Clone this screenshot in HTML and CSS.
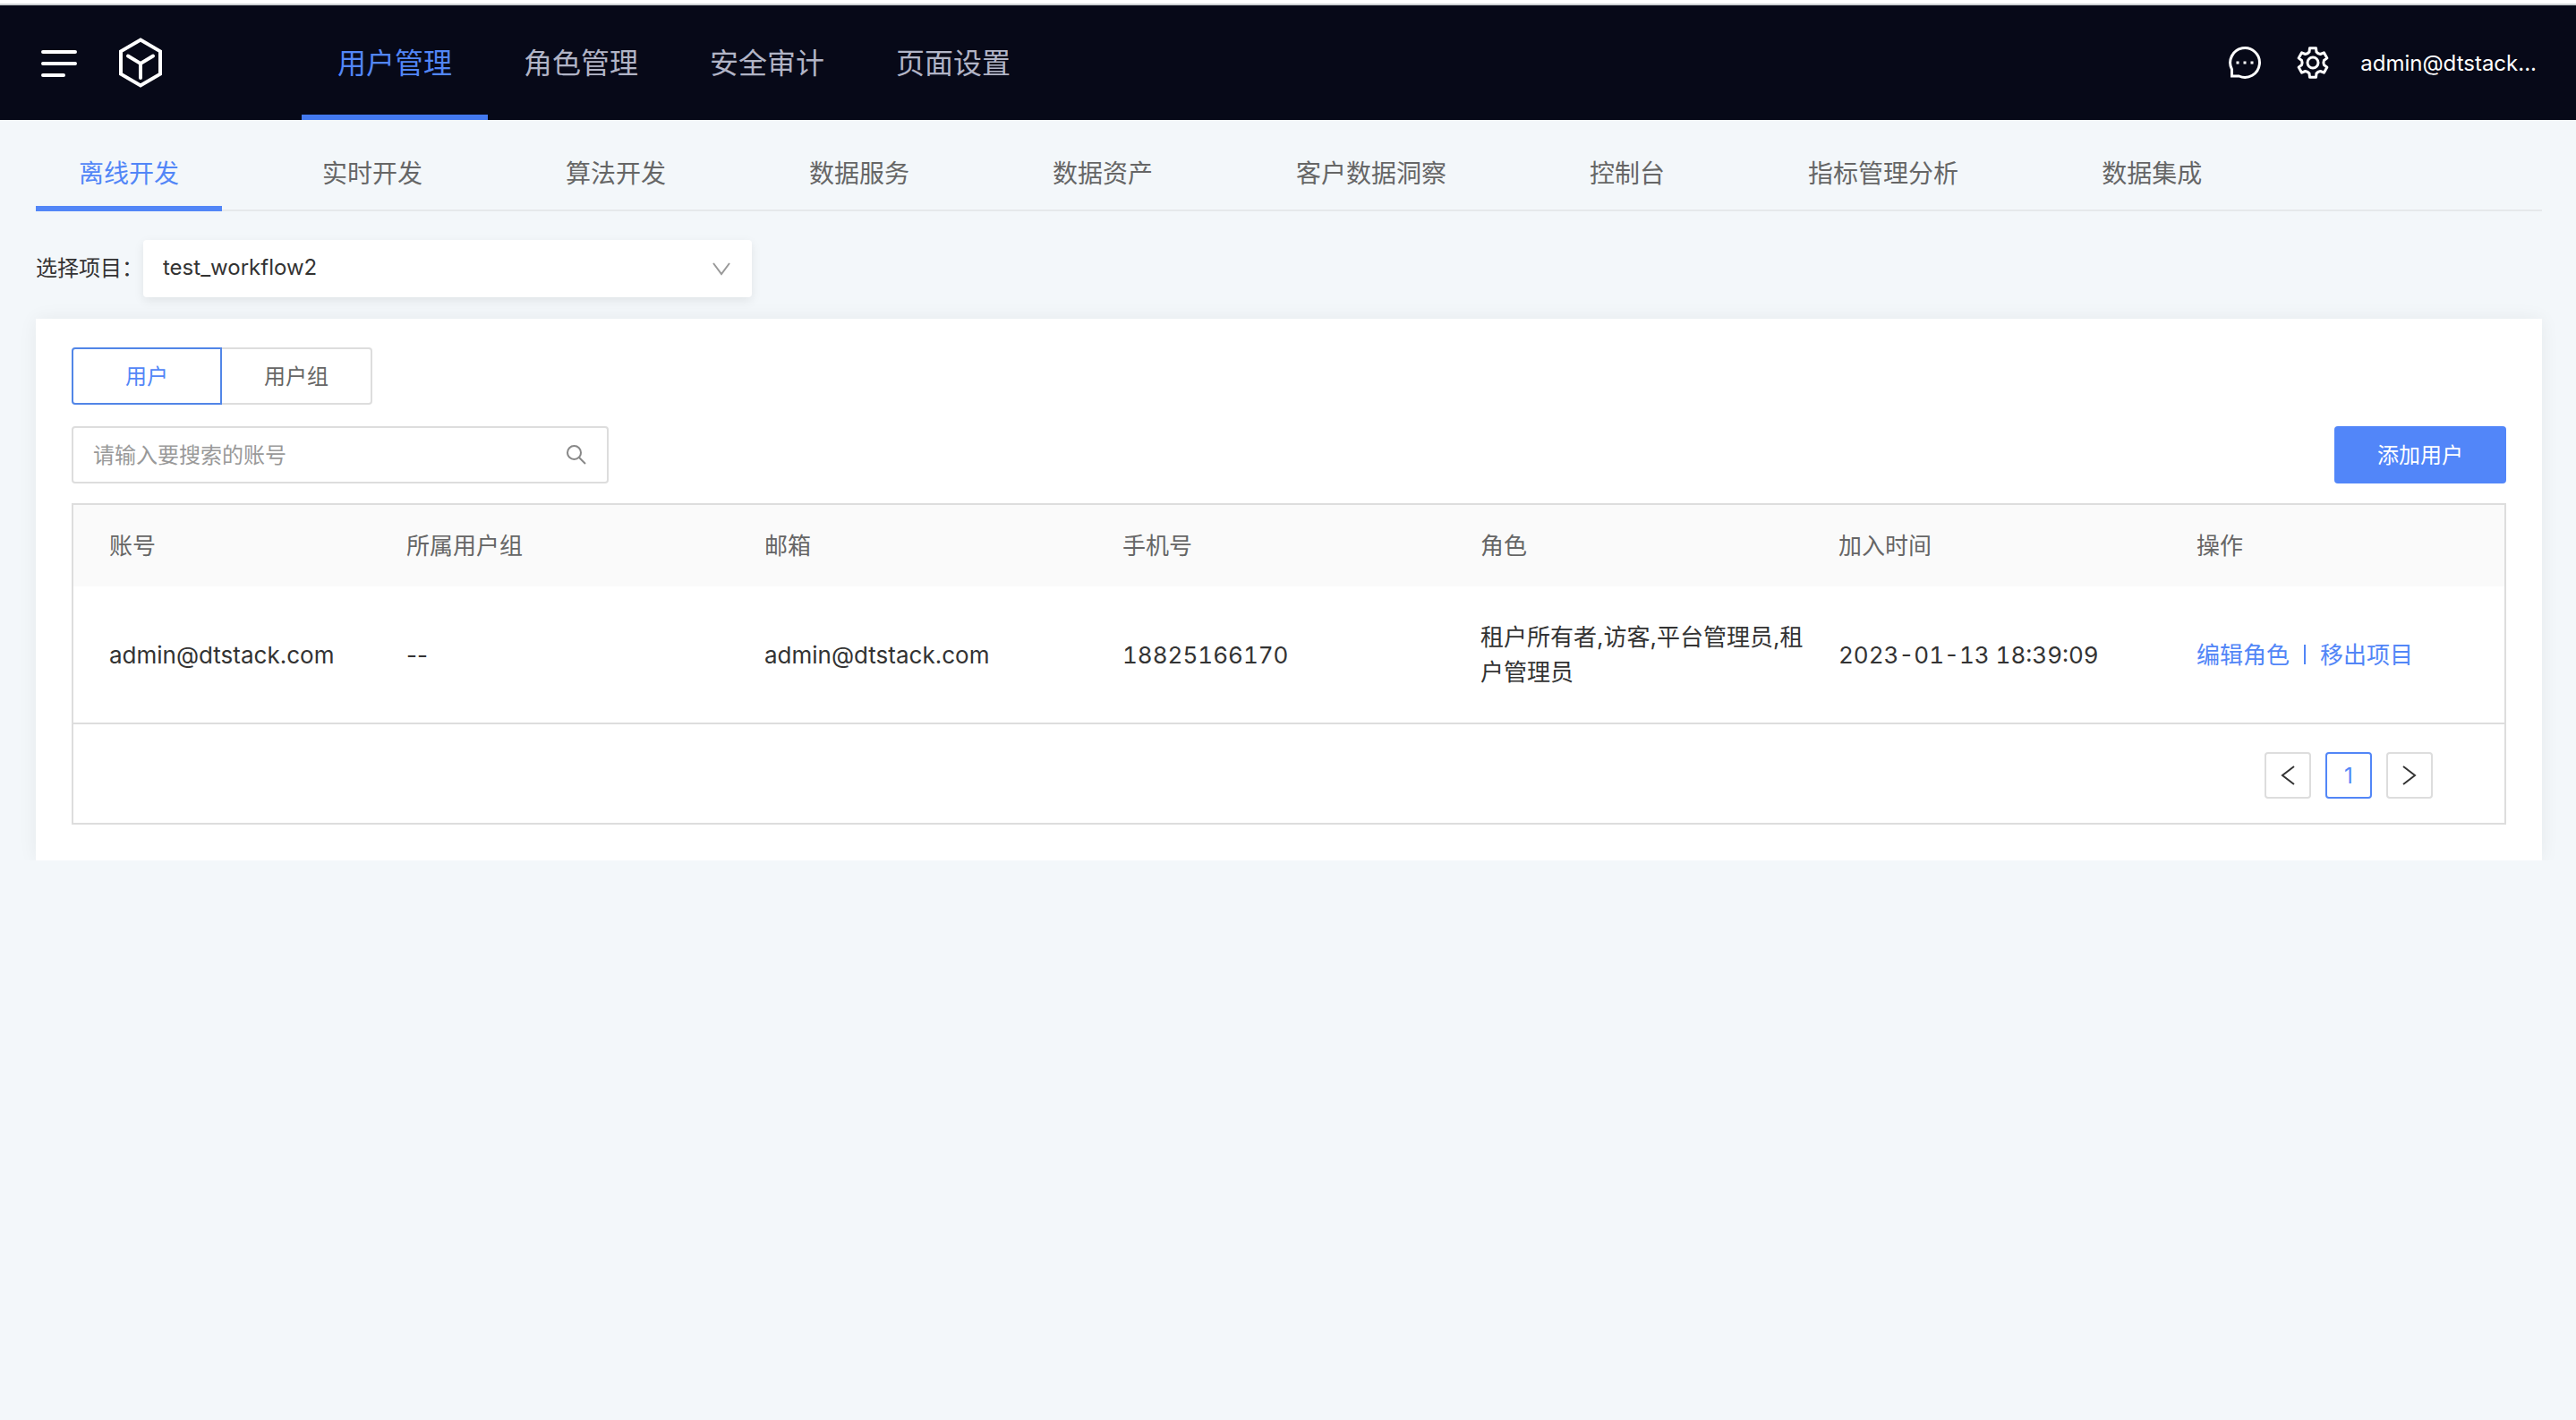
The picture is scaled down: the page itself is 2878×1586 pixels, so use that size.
FILE: index.html
```html
<!DOCTYPE html>
<html lang="zh-CN">
<head>
    <meta charset="UTF-8">
    <meta name="viewport" content="width=device-width, initial-scale=1.0">
    <title>用户管理</title>
    <link rel="stylesheet" href="styles.css">
</head>
<body>
    <header class="header">
        <button class="icon-btn" type="button" aria-label="菜单">
            <svg width="40" height="32" viewBox="0 0 40 32" fill="none" stroke="#fff" stroke-width="4" stroke-linecap="round">
                <path d="M2 4h36M2 17h36M2 30h23"/>
            </svg>
        </button>
        <a class="logo" href="#" aria-label="首页">
            <svg width="50" height="56" viewBox="0 0 50 56" fill="none" stroke="#fff" stroke-width="4" stroke-linecap="round">
                <path d="M25 2.5L47 15.3v25.4L25 53.5L3 40.7V15.3z"/>
                <path d="M11 20.5L25 29l14-8.5M25 29v16"/>
            </svg>
        </a>
        <nav class="main-nav">
            <a class="active" href="#">用户管理</a>
            <a href="#">角色管理</a>
            <a href="#">安全审计</a>
            <a href="#">页面设置</a>
        </nav>
        <div class="header-right">
            <div class="header-icons">
                <button class="icon-btn" type="button" aria-label="消息">
                    <svg width="36" height="36" viewBox="0 0 36 36" fill="none" stroke="#fff" stroke-width="3">
                        <path d="M3.5 33V25.5A16.4 16.4 0 1 1 11.5 33z"/>
                        <path d="M8.5 18h3M16.5 18h3M24.5 18h3"/>
                    </svg>
                </button>
                <button class="icon-btn" type="button" aria-label="设置">
                    <svg width="36" height="36" viewBox="-18 -18 36 36" fill="none" stroke="#fff" stroke-width="3" stroke-linejoin="round">
                        <path d="M-4-12L-3.5-16.3H3.5L4-12Q5.5-10 8.4-9.5L12.4-11.2L15.9-5.1L12.4-2.5Q11.4 0 12.4 2.5L15.9 5.1L12.4 11.2L8.4 9.5Q5.5 10 4 12L3.5 16.3H-3.5L-4 12Q-5.5 10-8.4 9.5L-12.4 11.2L-15.9 5.1L-12.4 2.5Q-11.4 0-12.4-2.5L-15.9-5.1L-12.4-11.2L-8.4-9.5Q-5.5-10-4-12z"/>
                        <circle r="6"/>
                    </svg>
                </button>
            </div>
            <a class="user-name" href="#">admin@dtstack...</a>
        </div>
    </header>

    <main class="page">
        <nav class="sub-nav">
            <a class="active" href="#">离线开发</a>
            <a href="#">实时开发</a>
            <a href="#">算法开发</a>
            <a href="#">数据服务</a>
            <a href="#">数据资产</a>
            <a href="#">客户数据洞察</a>
            <a href="#">控制台</a>
            <a href="#">指标管理分析</a>
            <a href="#">数据集成</a>
        </nav>

        <div class="project-row">
            <label for="project">选择项目：</label>
            <div class="select-box">
                <select id="project">
                    <option>test_workflow2</option>
                </select>
                <svg class="select-arrow" width="20" height="16" viewBox="0 0 20 16" fill="none" stroke="#999" stroke-width="2">
                    <path d="M1 1l9 12L19 1"/>
                </svg>
            </div>
        </div>

        <section class="card">
            <div class="switch">
                <button class="active" type="button">用户</button>
                <button type="button">用户组</button>
            </div>

            <div class="toolbar">
                <div class="search-box">
                    <input type="text" placeholder="请输入要搜索的账号" aria-label="搜索账号">
                    <svg class="search-icon" width="22" height="22" viewBox="0 0 22 22" fill="none" stroke="#888" stroke-width="2">
                        <circle cx="8.5" cy="8.5" r="7.5"/>
                        <path d="M14 14l7 7"/>
                    </svg>
                </div>
                <button class="add-btn" type="button">添加用户</button>
            </div>

            <div class="table-wrap">
                <table>
                    <colgroup>
                        <col class="col-account">
                        <col class="col-normal">
                        <col class="col-normal">
                        <col class="col-normal">
                        <col class="col-normal">
                        <col class="col-normal">
                        <col>
                    </colgroup>
                    <thead>
                        <tr>
                            <th>账号</th>
                            <th>所属用户组</th>
                            <th>邮箱</th>
                            <th>手机号</th>
                            <th>角色</th>
                            <th>加入时间</th>
                            <th>操作</th>
                        </tr>
                    </thead>
                    <tbody>
                        <tr>
                            <td>admin@dtstack.com</td>
                            <td>--</td>
                            <td>admin@dtstack.com</td>
                            <td class="num">18825166170</td>
                            <td>租户所有者,访客,平台管理员,租户管理员</td>
                            <td class="num">2023-01-13 18:39:09</td>
                            <td>
                                <div class="actions">
                                    <a href="#">编辑角色</a>
                                    <span class="divider"></span>
                                    <a href="#">移出项目</a>
                                </div>
                            </td>
                        </tr>
                    </tbody>
                </table>
                <div class="pagination">
                    <button type="button" aria-label="上一页">
                        <svg width="16" height="24" viewBox="0 0 16 24" fill="none" stroke="#333" stroke-width="2">
                            <path d="M15 2L2 12l13 10"/>
                        </svg>
                    </button>
                    <button class="active" type="button">1</button>
                    <button type="button" aria-label="下一页">
                        <svg width="16" height="24" viewBox="0 0 16 24" fill="none" stroke="#333" stroke-width="2">
                            <path d="M1 2l13 10L1 22"/>
                        </svg>
                    </button>
                </div>
            </div>
        </section>
    </main>
</body>
</html>
```
FILE: styles.css
```css
* {
    box-sizing: border-box;
}
body {
    margin: 0;
    min-height: 100vh;
    font-family: Inter, "Noto Sans CJK SC", sans-serif;
    font-size: 24px;
    color: #333;
    background-color: #f3f7fa;
    border-top: 4px solid #fff;
}
a {
    color: #5286f7;
    text-decoration: none;
}
button, input, select {
    font-family: inherit;
    font-size: 24px;
    color: inherit;
}
button {
    padding: 0 0 4px;
    cursor: pointer;
}
svg {
    display: block;
}

/* Header */
.header {
    display: flex;
    align-items: center;
    height: 130px;
    padding: 0 44px 0 46px;
    background-color: #070918;
    border-top: 2px solid #cdd1d3;
}
.icon-btn {
    padding: 0;
    background: none;
    border: none;
}
.logo {
    margin-left: 46px;
}
.main-nav {
    display: flex;
    align-self: stretch;
    margin-left: 155px;
}
.main-nav a {
    display: flex;
    align-items: center;
    padding: 2px 40px 0;
    font-size: 32px;
    color: #b1b4c6;
    border-bottom: 6px solid transparent;
}
.main-nav a.active {
    color: #5286f7;
    border-bottom-color: #4379ef;
}
.header-right {
    display: flex;
    align-items: center;
    gap: 35px;
    margin-left: auto;
}
.header-icons {
    display: flex;
    gap: 40px;
}
.user-name {
    color: #fff;
}

/* Sub navigation */
.page {
    padding: 0 38px 0 40px;
    overflow: hidden;
}
.sub-nav {
    display: flex;
    gap: 64px;
    height: 102px;
    border-bottom: 2px solid #e6e9eb;
}
.sub-nav a {
    display: flex;
    align-items: center;
    height: 102px;
    padding: 20px 48px 0;
    font-size: 28px;
    color: #666;
    border-bottom: 6px solid transparent;
}
.sub-nav a.active {
    color: #5286f7;
    border-bottom-color: #5286f7;
}

/* Project select */
.project-row {
    display: flex;
    align-items: center;
    padding: 32px 0 24px;
}
.project-row label {
    padding-bottom: 6px;
}
.select-box {
    position: relative;
    width: 680px;
}
.select-box select {
    display: block;
    width: 100%;
    height: 64px;
    padding: 0 22px 4px;
    background-color: #fff;
    border: none;
    border-radius: 4px;
    box-shadow: 0 4px 12px rgba(0, 0, 0, 0.08);
    appearance: none;
}
.select-arrow {
    position: absolute;
    top: 25px;
    right: 24px;
    pointer-events: none;
}

/* Content card */
.card {
    padding: 32px 40px 40px;
    background-color: #fff;
    box-shadow: 0 0 20px rgba(0, 0, 0, 0.06);
}
.switch {
    display: flex;
}
.switch button {
    width: 168px;
    height: 64px;
    color: #666;
    background-color: #fff;
    border: 2px solid #ddd;
    border-left: none;
    border-radius: 0 4px 4px 0;
}
.switch button.active {
    color: #5286f7;
    border: 2px solid #5286e7;
    border-radius: 4px 0 0 4px;
}
.toolbar {
    display: flex;
    justify-content: space-between;
    margin: 24px 0 22px;
}
.search-box {
    position: relative;
    width: 600px;
}
.search-box input {
    display: block;
    width: 100%;
    height: 64px;
    padding: 0 64px 0 22px;
    background-color: #fff;
    border: 2px solid #ddd;
    border-radius: 4px;
}
.search-box input::placeholder {
    color: #999;
}
.search-icon {
    position: absolute;
    top: 21px;
    right: 25px;
}
.add-btn {
    width: 192px;
    height: 64px;
    color: #fff;
    background-color: #5286f9;
    border: none;
    border-radius: 4px;
}

/* Table */
.table-wrap {
    border: 2px solid #ddd;
}
table {
    width: 100%;
    table-layout: fixed;
    border-collapse: separate;
    border-spacing: 0;
    font-size: 26px;
    line-height: 39px;
}
.col-account {
    width: 352px;
}
.col-normal {
    width: 400px;
}
th, td {
    padding: 0 0 0 20px;
    text-align: left;
}
th:first-child, td:first-child {
    padding-left: 40px;
}
th {
    height: 91px;
    font-weight: 400;
    color: #666;
    background-color: #fafafa;
}
td {
    height: 154px;
    border-bottom: 2px solid #ddd;
}
.num {
    font-variant-numeric: tabular-nums;
}
.actions {
    display: flex;
    align-items: center;
    gap: 16px;
}
.divider {
    width: 2px;
    height: 22px;
    background-color: #5286f7;
}
.pagination {
    display: flex;
    justify-content: flex-end;
    gap: 16px;
    padding: 31px 80px 27px;
}
.pagination button {
    display: flex;
    align-items: center;
    justify-content: center;
    width: 52px;
    height: 52px;
    padding: 0;
    background-color: #fff;
    border: 2px solid #ddd;
    border-radius: 4px;
}
.pagination button.active {
    color: #5286f7;
    border-color: #5286f7;
}
```
